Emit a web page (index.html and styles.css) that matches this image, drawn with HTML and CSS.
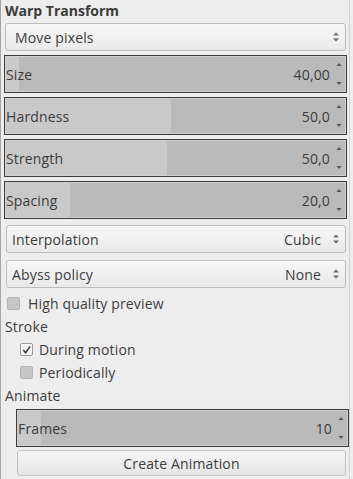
FILE: index.html
```html
<!DOCTYPE html>
<html>
<head>
<meta charset="utf-8">
<link rel="stylesheet" href="styles.css">
</head>
<body>
<div class="panel">
  <div class="title">Warp Transform</div>
  <div class="combo combo-top">
    <span class="combo-label">Move pixels</span>
    <svg class="updown" width="8" height="12" viewBox="0 0 8 12"><path d="M1 4.5 L4 1.5 L7 4.5Z M1 7.5 L4 10.5 L7 7.5Z" fill="#6a6a6a"/></svg>
  </div>

  <div class="spin spin-size" style="--p:14px">
    <span class="spin-label">Size</span><span class="spin-value">40,00</span>
    <svg class="spin-arrows" width="8" height="26" viewBox="0 0 8 26"><path d="M1.5 5 L4 2 L6.5 5Z M1.5 21 L4 24 L6.5 21Z" fill="#555"/></svg>
  </div>
  <div class="spin" style="--p:166px">
    <span class="spin-label">Hardness</span><span class="spin-value">50,0</span>
    <svg class="spin-arrows" width="8" height="26" viewBox="0 0 8 26"><path d="M1.5 5 L4 2 L6.5 5Z M1.5 21 L4 24 L6.5 21Z" fill="#555"/></svg>
  </div>
  <div class="spin" style="--p:162px">
    <span class="spin-label">Strength</span><span class="spin-value">50,0</span>
    <svg class="spin-arrows" width="8" height="26" viewBox="0 0 8 26"><path d="M1.5 5 L4 2 L6.5 5Z M1.5 21 L4 24 L6.5 21Z" fill="#555"/></svg>
  </div>
  <div class="spin" style="--p:65px">
    <span class="spin-label">Spacing</span><span class="spin-value">20,0</span>
    <svg class="spin-arrows" width="8" height="26" viewBox="0 0 8 26"><path d="M1.5 5 L4 2 L6.5 5Z M1.5 21 L4 24 L6.5 21Z" fill="#555"/></svg>
  </div>

  <div class="combo combo-interp">
    <span class="combo-label">Interpolation</span><span class="combo-value">Cubic</span>
    <svg class="updown" width="8" height="12" viewBox="0 0 8 12"><path d="M1 4.5 L4 1.5 L7 4.5Z M1 7.5 L4 10.5 L7 7.5Z" fill="#6a6a6a"/></svg>
  </div>
  <div class="combo combo-abyss">
    <span class="combo-label">Abyss policy</span><span class="combo-value">None</span>
    <svg class="updown" width="8" height="12" viewBox="0 0 8 12"><path d="M1 4.5 L4 1.5 L7 4.5Z M1 7.5 L4 10.5 L7 7.5Z" fill="#6a6a6a"/></svg>
  </div>

  <div class="check check-hq"><span class="box"></span><span>High quality preview</span></div>
  <div class="section">Stroke</div>
  <div class="check check-sub check-dm"><span class="box checked"><svg width="12" height="12" viewBox="0 0 12 12"><path d="M2.5 6 L5 9 L10 2" fill="none" stroke="#333" stroke-width="1.6"/></svg></span><span>During motion</span></div>
  <div class="check check-sub"><span class="box"></span><span>Periodically</span></div>
  <div class="section section-anim">Animate</div>

  <div class="spin spin-frames" style="--p:24px">
    <span class="spin-label">Frames</span><span class="spin-value">10</span>
    <svg class="spin-arrows" width="8" height="26" viewBox="0 0 8 26"><path d="M1.5 5 L4 2 L6.5 5Z M1.5 21 L4 24 L6.5 21Z" fill="#555"/></svg>
  </div>
  <div class="button">Create Animation</div>
</div>
</body>
</html>
```
FILE: styles.css
```css
html, body {
  margin: 0;
  padding: 0;
  background: #ededed;
}
body {
  width: 353px;
  height: 479px;
  overflow: hidden;
  font-family: "Open Sans", "Noto Sans", sans-serif;
  font-size: 14px;
  letter-spacing: 0.15px;
  color: #3c3c3c;
}
.panel {
  width: 350px;
  height: 479px;
  box-sizing: border-box;
  border-left: 1px solid #a6a6a6;
  border-right: 1px solid #d2d2d2;
  display: flex;
  flex-direction: column;
}
.title {
  font-weight: bold;
  letter-spacing: 0;
  height: 18px;
  line-height: 18px;
  margin-top: 2px;
  padding-left: 4px;
}
.combo {
  box-sizing: border-box;
  height: 28px;
  flex-shrink: 0;
  border: 1px solid #bdbdbd;
  border-radius: 3px;
  background: linear-gradient(#f7f7f7, #e9e9e9);
  display: flex;
  align-items: center;
  padding: 0 5px 0 9px;
}
.combo-top {
  margin: 3px 3px 0 4px;
}
.combo-label { flex: 1; }
.combo-value { margin-right: 11px; }
.updown { display: block; }
.combo-interp { margin: 6px 3px 0 5px; padding-left: 5px; }
.combo-abyss { margin: 7px 3px 0 5px; padding-left: 5px; }

.spin {
  box-sizing: border-box;
  height: 38px;
  flex-shrink: 0;
  margin: 4px 2px 0 3px;
  border: 1px solid #3d3d3d;
  box-shadow: inset 0 0 0 1px #cfcfcf;
  background: linear-gradient(to right, #c9c9c9 var(--p), #bababa var(--p));
  display: flex;
  align-items: center;
  padding: 0 3px 0 1px;
}
.spin-size { margin-top: 4px; }
.spin-label { flex: 1; }
.spin-value { margin-right: 5px; }
.spin-arrows { display: block; }

.check {
  display: flex;
  align-items: center;
  height: 20px;
  flex-shrink: 0;
  margin-top: 5px;
  padding-left: 6px;
}
.box {
  width: 13px;
  height: 13px;
  box-sizing: border-box;
  border: 1px solid #b4b4b4;
  border-radius: 2px;
  background: #c6c6c6;
  margin-right: 8px;
  display: flex;
  align-items: center;
  justify-content: center;
}
.box.checked {
  background: #f4f4f4;
  border-color: #9a9a9a;
}
.box svg { display: block; }
.section {
  height: 18px;
  line-height: 18px;
  flex-shrink: 0;
  margin-top: 5px;
  padding-left: 4px;
}
.check-sub {
  padding-left: 19px;
  height: 23px;
  margin-top: 0;
}
.check-dm { margin-top: 2px; }
.check-sub .box { margin-right: 6px; }
.section-anim { margin-top: 3px; }
.spin-frames {
  margin: 4px 0 0 15px;
}
.button {
  box-sizing: border-box;
  height: 26px;
  flex-shrink: 0;
  margin: 3px 3px 0 16px;
  border: 1px solid #c2c2c2;
  border-radius: 3px;
  background: linear-gradient(#f5f5f5, #e5e5e5);
  display: flex;
  align-items: center;
  justify-content: center;
}
```
